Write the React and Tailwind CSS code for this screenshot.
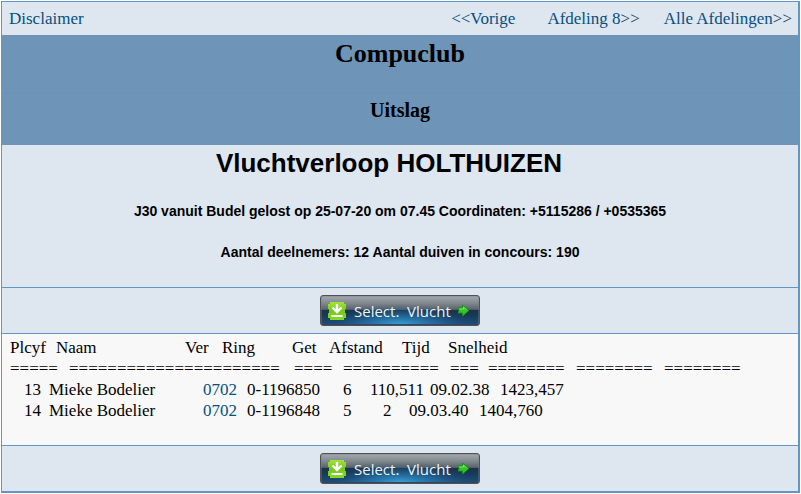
import React from 'react';

const headers = [
  { label: 'Plcyf', width: 'w-[46px]' },
  { label: 'Naam', width: 'w-[129px]' },
  { label: 'Ver', width: 'w-[37px]' },
  { label: 'Ring', width: 'w-[70px]' },
  { label: 'Get', width: 'w-[37px]' },
  { label: 'Afstand', width: 'w-[73px]' },
  { label: 'Tijd', width: 'w-[46px]' },
  { label: 'Snelheid', width: 'w-[70px]' },
];

const rules = [
  { length: 5, width: 'w-[59px]' },
  { length: 22, width: 'w-[225px]' },
  { length: 4, width: 'w-[49px]' },
  { length: 10, width: 'w-[107px]' },
  { length: 3, width: 'w-[38px]' },
  { length: 8, width: 'w-[88px]' },
  { length: 8, width: 'w-[88px]' },
  { length: 8, width: 'w-[79px]' },
];

const results = [
  { place: 13, name: 'Mieke Bodelier', club: '0702', ring: '0-1196850', entered: 6, distance: '110,511', distanceWidth: 'w-[60px] p-0', time: '09.02.38', speed: '1423,457' },
  { place: 14, name: 'Mieke Bodelier', club: '0702', ring: '0-1196848', entered: 5, distance: '2', distanceWidth: 'w-[39px] p-0 pl-[13px]', time: '09.03.40', speed: '1404,760' },
];

const SelectButton = ({ id }) => (
  <div className="flex justify-center border-t border-[#6496c3] bg-[#dee6ef] py-[7px]">
    <button
      type="button"
      className="relative flex h-[31px] w-40 items-center overflow-hidden rounded-[3px] border border-[#4d5258] bg-[linear-gradient(180deg,#a3a8ab_0%,#868d92_22%,#59646d_46%,#1b3247_50%,#173a59_68%,#1d4f7c_100%)] pl-[7px] text-[#eef2f5] shadow-[inset_0_0_0_1px_#7b848b66]"
    >
      <svg className="absolute inset-0 h-full w-full" viewBox="0 0 158 29" preserveAspectRatio="none" aria-hidden="true">
        <defs>
          <radialGradient id={`${id}-glow`} cx="0.5" cy="0.5" r="0.5">
            <stop offset="0" stopColor="#3fb4ee" stopOpacity="0.85" />
            <stop offset="0.5" stopColor="#2b86c4" stopOpacity="0.45" />
            <stop offset="1" stopColor="#1c3f70" stopOpacity="0" />
          </radialGradient>
        </defs>
        <rect x="0" y="8" width="158" height="42" fill={`url(#${id}-glow)`} />
        <path d="M1 28.5H157" stroke="#34465c" />
      </svg>
      <svg className="relative h-[18px] w-[18px]" viewBox="0 0 18 18" aria-hidden="true">
        <defs>
          <linearGradient id={`${id}-tile`} x1="0" y1="0" x2="0" y2="1">
            <stop offset="0" stopColor="#a3e33c" />
            <stop offset="0.5" stopColor="#74c81c" />
            <stop offset="1" stopColor="#84dc25" />
          </linearGradient>
        </defs>
        <path d="M2 0H16V2H18V7H17V11H18V16H16V18H2V16H0V11H1V7H0V2H2Z" fill={`url(#${id}-tile)`} />
        <path d="M9 2V9M4.5 5.5L9 10L13.5 5.5" fill="none" stroke="#fff" strokeWidth="2.4" />
        <path d="M3.5 14H14.5" stroke="#fff" strokeWidth="2.2" />
      </svg>
      <span className="relative ml-2 font-['Open_Sans',sans-serif] text-[15px] leading-5 whitespace-pre">Select.  Vlucht</span>
      <svg className="absolute right-[9px] h-[13px] w-[13px]" viewBox="0 0 13 13" aria-hidden="true">
        <path d="M1 4H5.5V1L12 6.5L5.5 12V9H1L2 6.5Z" fill="#33c522" stroke="#1f8f22" />
        <path d="M2.2 5H6.5V3.2L9.5 5.7" fill="none" stroke="#7cec5c" />
      </svg>
    </button>
  </div>
);

export default function App() {
  return (
    <div className="p-px font-['Liberation_Serif',serif] text-[17px] leading-[21px] text-black">
      <main className="border border-r-2 border-b-2 border-[#6496c3] bg-[#dee6ef]">
        <nav className="flex h-[33px] items-center justify-between pr-[6px] pl-[7px] text-[#06507f]">
          <a href="#disclaimer">Disclaimer</a>
          <div className="flex">
            <a href="#vorige" className="mr-8">&lt;&lt;Vorige</a>
            <a href="#afdeling" className="mr-6">Afdeling 8<span className="text-[#20435c]">&gt;&gt;</span></a>
            <a href="#alle">Alle Afdelingen<span className="text-[#20435c]">&gt;&gt;</span></a>
          </div>
        </nav>

        <header className="bg-[#6e94b8] text-center font-bold">
          <h1 className="h-[58px] pt-1 text-[26px] leading-[30px]">Compuclub</h1>
          <h2 className="h-[52px] border-t border-[#6992b9] pt-1 text-[20px] leading-6">Uitslag</h2>
        </header>

        <section className="px-4 pt-[3px] pb-[25px] text-center font-['Liberation_Sans',sans-serif] font-bold">
          <h2 className="pr-[22px] text-[26px] leading-[30px]">Vluchtverloop HOLTHUIZEN</h2>
          <p className="mt-[23px] text-[14px] leading-5">J30 vanuit Budel gelost op 25-07-20 om 07.45 Coordinaten: +5115286 / +0535365</p>
          <p className="mt-[21px] text-[14px] leading-5">Aantal deelnemers: 12 Aantal duiven in concours: 190</p>
        </section>

        <SelectButton id="top" />

        <section className="border-t border-[#6496c3] bg-[#f8f8f8] pt-[3px] pb-6 pl-2">
          <table className="block">
            <thead className="block">
              <tr className="flex text-left">
                {headers.map((h) => (
                  <th key={h.label} className={`p-0 font-normal whitespace-nowrap ${h.width}`}>{h.label}</th>
                ))}
              </tr>
            </thead>
            <tbody className="block">
              <tr className="flex" aria-hidden="true">
                {rules.map((r, i) => (
                  <td key={i} className={`p-0 whitespace-nowrap ${r.width}`}>{'='.repeat(r.length)}</td>
                ))}
              </tr>
              {results.map((r) => (
                <tr key={r.place} className="flex whitespace-nowrap">
                  <td className="w-[39px] p-0 pl-[14px]">{r.place}</td>
                  <td className="w-[154px] p-0">{r.name}</td>
                  <td className="w-11 p-0">
                    <a href="#vereniging" className="text-[#06507f]">{r.club}</a>
                  </td>
                  <td className="w-24 p-0">{r.ring}</td>
                  <td className="w-[27px] p-0">{r.entered}</td>
                  <td className={r.distanceWidth}>{r.distance}</td>
                  <td className="w-[70px] p-0">{r.time}</td>
                  <td className="p-0">{r.speed}</td>
                </tr>
              ))}
            </tbody>
          </table>
        </section>

        <SelectButton id="bottom" />
      </main>
    </div>
  );
}
